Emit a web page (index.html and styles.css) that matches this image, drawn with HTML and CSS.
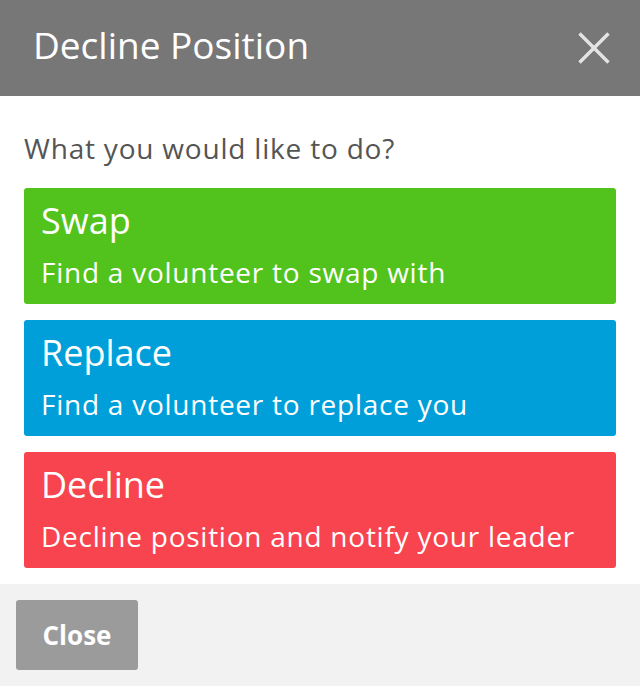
FILE: index.html
```html
<!DOCTYPE html>
<html>
<head>
<meta charset="utf-8">
<link rel="stylesheet" href="styles.css">
</head>
<body>
<div class="modal">
  <header class="header">
    <h1 class="title">Decline Position</h1>
    <svg class="close-x" width="32" height="32" viewBox="0 0 32 32"><path d="M1.5 1.5 L30.5 30.5 M30.5 1.5 L1.5 30.5" stroke="#e4e4e4" stroke-width="3.4" fill="none"/></svg>
  </header>
  <main class="body">
    <p class="question">What you would like to do?</p>
    <div class="options">
      <div class="option swap"><div class="opt-title">Swap</div><div class="opt-sub">Find a volunteer to swap with</div></div>
      <div class="option replace"><div class="opt-title">Replace</div><div class="opt-sub">Find a volunteer to replace you</div></div>
      <div class="option decline"><div class="opt-title">Decline</div><div class="opt-sub">Decline position and notify your leader</div></div>
    </div>
  </main>
  <footer class="footer">
    <button class="close-btn">Close</button>
  </footer>
</div>
</body>
</html>
```
FILE: styles.css
```css
html, body { margin: 0; padding: 0; }
body { font-family: "Open Sans", "Lato", sans-serif; width: 640px; height: 686px; overflow: hidden; background: #f2f2f2; }
.modal { display: flex; flex-direction: column; height: 686px; }
.header { height: 96px; background: #777777; display: flex; align-items: center; justify-content: space-between; padding: 0 30px 0 33px; box-sizing: border-box; }
.title { margin: 0 0 7px; font-weight: 400; font-size: 37px; line-height: 44px; color: #ffffff; }
.close-x { display: block; }
.body { background: #ffffff; padding: 36px 24px 16px; }
.question { margin: 0 0 24px; font-size: 28px; line-height: 32px; letter-spacing: 0.8px; color: #555555; }
.options { display: flex; flex-direction: column; gap: 16px; }
.option { height: 116px; border-radius: 3px; color: #ffffff; padding: 11px 17px 0; box-sizing: border-box; }
.opt-title { font-size: 36px; line-height: 44px; }
.opt-sub { margin-top: 9px; font-size: 28px; line-height: 40px; letter-spacing: 0.75px; }
.swap { background: #52c31d; }
.replace { background: #009fd9; }
.decline { background: #f7444e; }
.footer { flex: 1; background: #f2f2f2; padding: 16px; }
.close-btn { display: block; width: 122px; height: 70px; padding: 0; border: 0; border-radius: 3px; background: #9b9b9b; color: #ffffff; font-family: inherit; font-weight: 700; font-size: 26px; }
```
